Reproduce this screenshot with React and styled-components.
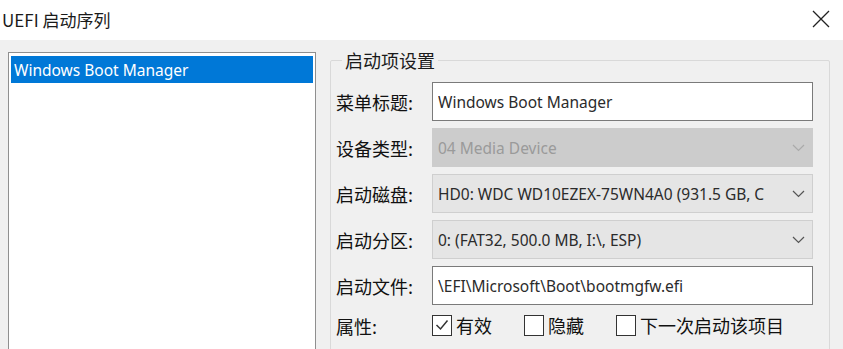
import React from 'react'
import styled, { createGlobalStyle } from 'styled-components'

const Global = createGlobalStyle`
    body {
        margin: 0;
        background: #f0f0f0;
        font-family: "Noto Sans", "Noto Sans CJK SC", sans-serif;
        overflow: hidden;
    }
`;

const Window = styled.div`
    height: 100vh;
    overflow: hidden;
    display: flex;
    flex-direction: column;
`;

const Header = styled.div`
    height: 40px;
    flex: none;
    background: #ffffff;
    display: flex;
    align-items: center;
    justify-content: space-between;
    padding: 0 13px 0 2px;
`;
const Title = styled.div`
    font-family: "Noto Sans CJK SC", sans-serif;
    font-size: 17px;
    color: #1a1a1a;
    margin-top: -1px;
`;
const CloseButton = styled.div`
    width: 18px;
    height: 18px;
    display: flex;
    margin-top: -3px;
`;

const Body = styled.div`
    flex: 1;
    min-height: 0;
    display: flex;
    align-items: flex-start;
    padding: 8px 0 0 8px;
`;

const ListBox = styled.div`
    width: 302px;
    height: 310px;
    margin-top: 4px;
    background: #ffffff;
    border: 1px solid #8f8f8f;
    padding: 3px 2px;
    box-sizing: content-box;
`;
const ListItem = styled.div`
    height: 27px;
    display: flex;
    align-items: center;
    padding-left: 3px;
    font-size: 15.5px;
    background: ${props => props.selected ? "#0078d7" : "transparent"};
    color: ${props => props.selected ? "#ffffff" : "#222"};
`;

const GroupBox = styled.fieldset`
    width: 477px;
    margin: 0 0 0 14px;
    padding: 10px 16px 20px 5px;
    border: 1px solid #d9d9d9;
    border-radius: 2px;
`;
const Legend = styled.legend`
    font-family: "Noto Sans CJK SC", sans-serif;
    font-size: 18px;
    line-height: 24px;
    color: #1a1a1a;
    padding: 0 3px;
    margin-left: 6px;
`;

const Form = styled.div`
    display: grid;
    grid-template-columns: 96px 1fr;
    row-gap: 7px;
    align-items: center;
`;
const Label = styled.div`
    font-family: "Noto Sans CJK SC", sans-serif;
    font-size: 18px;
    color: #111;
    white-space: nowrap;
`;
const Field = styled.div`
    height: 39px;
    box-sizing: border-box;
    display: flex;
    align-items: center;
    padding: 0 7px 0 5px;
    font-size: 15.5px;
    white-space: nowrap;
    overflow: hidden;
    background: ${props => props.disabled ? "#cccccc" : props.select ? "#e5e5e5" : "#ffffff"};
    border: 1px solid ${props => props.disabled ? "#cccccc" : props.select ? "#cfcfcf" : "#7a7a7a"};
    color: ${props => props.disabled ? "#9a9a9a" : "#2b2b2b"};
`;
const FieldText = styled.span`
    flex: 1;
    overflow: hidden;
`;

const Options = styled.div`
    display: flex;
    align-items: center;
    gap: 32px;
    height: 28px;
    margin-top: -1px;
`;
const Option = styled.div`
    display: flex;
    align-items: center;
    gap: 4px;
    font-family: "Noto Sans CJK SC", sans-serif;
    font-size: 18px;
    color: #111;
`;
const Box = styled.div`
    width: 20px;
    height: 21px;
    box-sizing: border-box;
    border: 1.5px solid #333;
    background: #fff;
    display: flex;
    align-items: center;
    justify-content: center;
`;

const Chevron = ({ color }) => (
    <svg width="13" height="8" viewBox="0 0 13 8">
        <polyline points="1,1 6.5,6.5 12,1" fill="none" stroke={color} strokeWidth="1.2" />
    </svg>
)

const CheckBox = ({ checked, label }) => (
    <Option>
        <Box>
            {checked && (
                <svg width="14" height="12" viewBox="0 0 14 12">
                    <polyline points="1.5,6 5.5,10 12.5,1.5" fill="none" stroke="#333" strokeWidth="1.5" />
                </svg>
            )}
        </Box>
        {label}
    </Option>
)

export default function App() {
    return (
        <Window>
            <Global />
            <Header>
                <Title>UEFI 启动序列</Title>
                <CloseButton>
                    <svg width="18" height="18" viewBox="0 0 18 18">
                        <path d="M1 1 L17 17 M17 1 L1 17" stroke="#222" strokeWidth="1.3" />
                    </svg>
                </CloseButton>
            </Header>
            <Body>
                <ListBox>
                    <ListItem selected>Windows Boot Manager</ListItem>
                </ListBox>
                <GroupBox>
                    <Legend>启动项设置</Legend>
                    <Form>
                        <Label>菜单标题:</Label>
                        <Field><FieldText>Windows Boot Manager</FieldText></Field>
                        <Label>设备类型:</Label>
                        <Field disabled><FieldText>04 Media Device</FieldText><Chevron color="#aaaaaa" /></Field>
                        <Label>启动磁盘:</Label>
                        <Field select><FieldText>HD0: WDC WD10EZEX-75WN4A0 (931.5 GB, C</FieldText><Chevron color="#555" /></Field>
                        <Label>启动分区:</Label>
                        <Field select><FieldText>0: (FAT32, 500.0 MB, I:\, ESP)</FieldText><Chevron color="#555" /></Field>
                        <Label>启动文件:</Label>
                        <Field><FieldText>\EFI\Microsoft\Boot\bootmgfw.efi</FieldText></Field>
                        <Label>属性:</Label>
                        <Options>
                            <CheckBox checked label="有效" />
                            <CheckBox label="隐藏" />
                            <CheckBox label="下一次启动该项目" />
                        </Options>
                    </Form>
                </GroupBox>
            </Body>
        </Window>
    )
}
